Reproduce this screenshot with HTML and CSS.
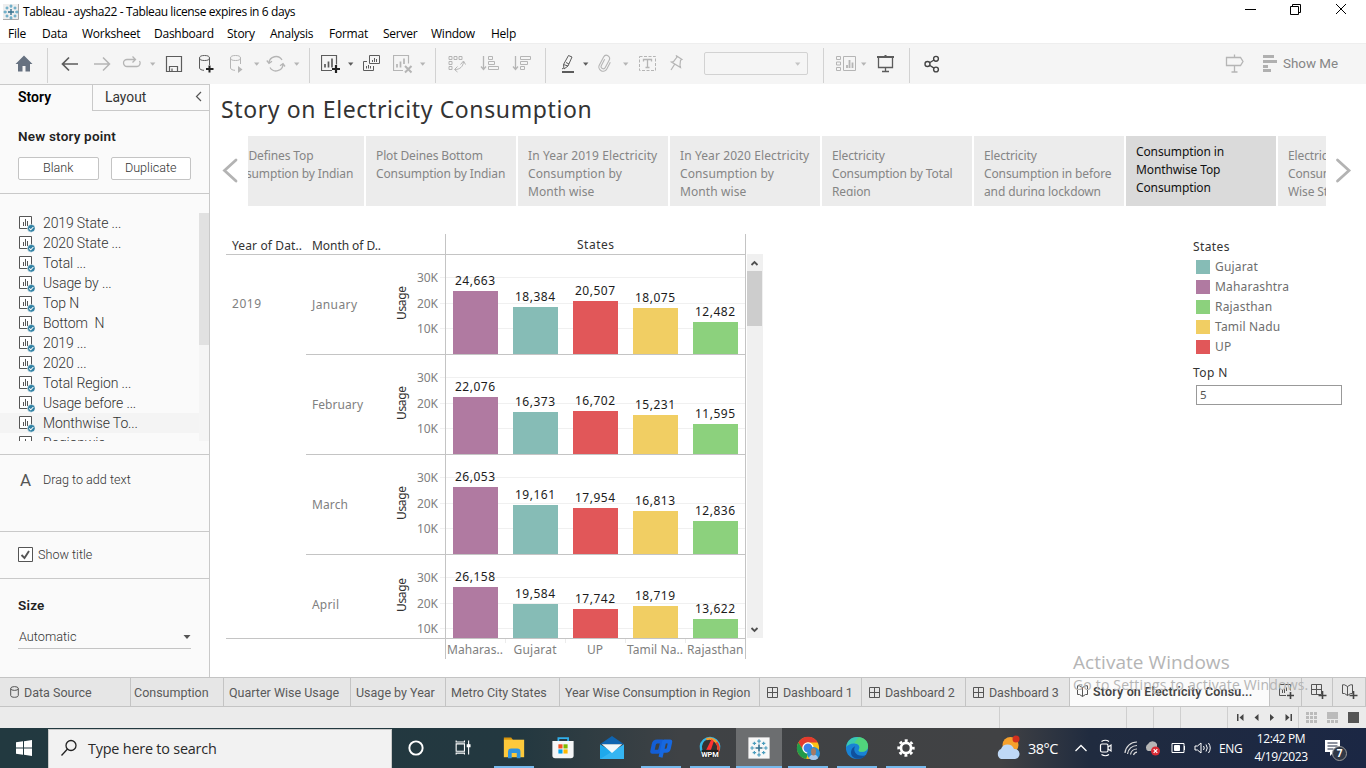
FILE: index.html
```html
<!DOCTYPE html>
<html lang="en">
<head>
<meta charset="utf-8">
<title>Tableau - aysha22</title>
<link rel="stylesheet" href="styles.css">
</head>
<body>
<svg class="defs" width="0" height="0">
  <defs>
    <g id="spark">
      <path d="M8 5v6M5 8h6" stroke="#35718f" stroke-width="1.4"/>
      <path d="M8 .5v3.500M6.500 2h3M8 12v3.500M6.500 14h3M.5 8H4M2 6.500v3M12 8h3.500M14 6.500v3M4 2.500v3M2.500 4h3M12 2.500v3M10.500 4h3M4 10.500v3M2.500 12h3M12 10.500v3M10.500 12h3" stroke="#4a9cbd" stroke-width="1"/>
    </g>
    <g id="sheet">
      <path d="M.5 .5h12v12H.5z" fill="#fff" stroke="#555"/>
      <path d="M4.500 6v4M6.500 3v7M8.500 5v5" stroke="#555"/>
      <circle cx="12.300" cy="12.300" r="3.900" fill="#3181a3" stroke="#fafafa" stroke-width=".6"/>
      <path d="M10.300 12.300l1.500 1.500 2.600-2.800" fill="none" stroke="#fff" stroke-width="1.100"/>
    </g>
    <g id="board"><path d="M.5 .5h10v10H.5zM5.500 .5v10M.5 5.500h10" fill="none" stroke="#555"/></g>
    <g id="book"><path d="M5.500 2.500v9M5.500 2.500L2.500 .8H.5v8.700h2l3 2 3-2h2V.8h-2z" fill="none" stroke="#555"/></g>
    <path id="caret" d="M1 1.500h5.400L3.700 4.700z"/>
  </defs>
</svg>

<header class="titlebar">
  <svg width="16" height="16"><path d="M0 0h15v15H0z" fill="#eee"/><path d="M15.500 0v15.500H0" fill="none" stroke="#aaa"/><use href="#spark"/></svg>
  <span class="win-title">Tableau - aysha22 - Tableau license expires in 6 days</span>
  <svg class="win-buttons" width="112" height="16" fill="none" stroke="#000"><path d="M0 8.500h11M45.500 5.500h8v8h-8zM47.500 5.500v-2h8v8h-2M91 3l10 10M101 3L91 13"/></svg>
</header>
<nav class="menubar"><span>File</span><span>Data</span><span>Worksheet</span><span>Dashboard</span><span>Story</span><span>Analysis</span><span>Format</span><span>Server</span><span>Window</span><span>Help</span></nav>

<div class="toolbar">
  <svg class="ic" viewBox="0 0 20 20"><path d="M10 1.500L1.500 10H4v7.500h4.500V12h3v5.500H16V10h2.500z" fill="#667180"/></svg>
  <i class="sep"></i>
  <svg class="ic dark" viewBox="0 0 20 20"><path d="M18 10H3M9 3.500L2.500 10 9 16.500" stroke-width="1.700"/></svg>
  <svg class="ic pale" viewBox="0 0 20 20"><path d="M2 10h15M11 3.500l6.500 6.500-6.500 6.500" stroke-width="1.500"/></svg>
  <svg class="ic pale" viewBox="0 0 20 20"><path d="M13 5.500H5a3.500 3.500 0 0 0 0 7h10a3.500 3.500 0 0 0 2.500-5.500M10.500 2.500l3 3-3 3" stroke-width="1.300"/></svg>
  <svg class="caret pale"><use href="#caret"/></svg>
  <svg class="ic dark" viewBox="0 0 20 20"><path d="M2.500 2.500h15v15h-15zM5.500 17v-4.500h8V17M8 17v-2.500" stroke-width="1.200"/></svg>
  <svg class="ic dark" viewBox="0 0 20 20"><ellipse cx="8.500" cy="4" rx="5" ry="2.500"/><path d="M3.500 4v10c0 1.200 2 2.200 4.500 2.300M13.500 4v7"/><path d="M13.500 11.500v7M10 15h7.500" stroke="#222" stroke-width="2"/></svg>
  <svg class="ic pale" viewBox="0 0 20 20"><ellipse cx="8.500" cy="4" rx="5" ry="2.500"/><path d="M3.500 4v10c0 1.200 2 2.200 4.500 2.300M13.500 4v6"/><path d="M11 12v7l4.500-3.500z" fill="#b5b5b5" stroke="none"/></svg>
  <svg class="caret pale"><use href="#caret"/></svg>
  <svg class="ic pale" viewBox="0 0 20 20"><path d="M3 9a7 7 0 0 1 13-3M17 10A7 7 0 0 1 4 13.500M.8 6.500L3 9.300l3-2M19 12.500l-2-2.800-3 2" stroke-width="1.300"/></svg>
  <svg class="caret pale"><use href="#caret"/></svg>
  <i class="sep"></i>
  <svg class="ic dark" viewBox="0 0 20 20"><path d="M11 16.500H.5V1.500h15v9" stroke-width="1.200"/><path d="M4 13.500V10M7.500 13.500v-6M11 13.500v-9" stroke-width="1.700"/><path d="M15 11v8M11 15h8" stroke="#222" stroke-width="2.200"/></svg>
  <svg class="caret dark"><use href="#caret"/></svg>
  <svg class="ic dark" viewBox="0 0 20 20"><path d="M7.500 1.500h10v8h-10zM5 7.500H1.500v9h10v-4.500"/><path d="M10.500 8V6M12.500 8V4M14.500 8V5M4.500 14.500V12M6.500 14.500V11M8.500 14.500V12"/></svg>
  <svg class="ic pale" viewBox="0 0 20 20"><path d="M10 16.500H.5V1.500h15v8" stroke-width="1.200"/><path d="M4 13.500V10M7.500 13.500v-6M11 10V4.500" stroke-width="1.700"/><path d="M12 12l6.500 6.500M18.500 12L12 18.500" stroke-width="2"/></svg>
  <svg class="caret pale"><use href="#caret"/></svg>
  <i class="sep"></i>
  <svg class="ic pale" viewBox="0 0 20 20"><path d="M2 2.500h3v3H2zM7 2.500h3v3H7zM12 2.500h3v3h-3zM2 7.500h3v3H2zM2 12.500h3v3H2zM8 15.500c5 0 8-3 8.500-7.500M13.500 10.500L16.500 7l2 3.500M10.500 12.500L7.500 15.500l3 2.500"/></svg>
  <svg class="ic pale" viewBox="0 0 20 20"><path d="M3.500 2v13M1 12.500l2.500 3 2.500-3" stroke-width="1.300"/><path d="M8.500 2.500h4v3h-4zM8.500 7.500h6v3h-6zM8.500 12.500h10v3h-10z"/></svg>
  <svg class="ic pale" viewBox="0 0 20 20"><path d="M3.500 2v13M1 12.500l2.500 3 2.500-3" stroke-width="1.300"/><path d="M8.500 2.500h10v3h-10zM8.500 7.500h7v3h-7zM8.500 12.500h4v3h-4z"/></svg>
  <i class="sep"></i>
  <svg class="ic dark" viewBox="0 0 20 20"><path d="M4 18h12" stroke-width="2"/><path d="M10.500 1.500l3.500 1.500-4 9-4 3-.5-4.500zM5.500 10.500l4.500 1.500M8 8.500l3 1.500M5.500 14l-1.500 1"/></svg>
  <svg class="caret dark"><use href="#caret"/></svg>
  <svg class="ic pale" viewBox="0 0 20 20"><g transform="rotate(28 10 10)"><path d="M7.500 6v7a2.200 2.200 0 0 0 4.400 0V4.500a3.200 3.200 0 0 0-6.400 0v9a4.200 4.200 0 0 0 8.400 0V6" stroke-width="1.100"/></g></svg>
  <svg class="caret pale"><use href="#caret"/></svg>
  <svg class="ic pale" viewBox="0 0 20 20"><path d="M1.500 2.500h16v14h-16z" stroke-dasharray="3 1.500"/><path d="M5.500 7.500v-2h8v2M9.500 5.500v8M7.500 13.500h4" stroke-width="1.300"/></svg>
  <svg class="ic pale" viewBox="0 0 20 20"><path d="M10 1.500l6 4-1.500.8-.5 5 .5 2.200-9-5.500 2-.3L11 3zM8.500 10.500L5 16" transform="translate(-1 0)" stroke-width="1.200"/></svg>
  <div class="combo"><svg class="caret"><use href="#caret"/></svg></div>
  <i class="sep"></i>
  <svg class="ic pale" viewBox="0 0 20 20"><path d="M.5 2.500h4v3h-4zM.5 8h4v3h-4zM.5 13.500h4v3h-4zM7.500 2.500h12v14h-12z"/><path d="M11 14v-3M13.500 14V6M16.500 14V8.500" stroke-width="1.800"/></svg>
  <svg class="caret pale"><use href="#caret"/></svg>
  <svg class="ic dark" viewBox="0 0 20 20"><path d="M1 3h17M9.500 1v1" stroke-width="2"/><path d="M2.500 4v9.500h14V4M9.500 13.500v4M6 17.500h7" stroke-width="1.300"/></svg>
  <i class="sep"></i>
  <svg class="ic share" viewBox="0 0 20 20"><circle cx="5.500" cy="10" r="2.500"/><circle cx="14" cy="4.800" r="2.400"/><circle cx="14" cy="15.500" r="2.400"/><path d="M8 8.500L12 6M8 11.500l4 2.700"/></svg>
  <svg class="ic pale" viewBox="0 0 20 20"><path d="M2.500 3.500h14l2.500 4-2.500 4h-14zM10.500 .5v3M10.500 11.500v7M7.500 18h6" stroke-width="1.300"/></svg>
  <div class="showme"><svg width="16" height="19" fill="#b0b0b0"><path d="M1 1h11v3H1zM1 6h14v3H1zM1 11h5v3H1zM1 15h8v3H1z"/></svg><span>Show Me</span></div>
</div>

<main class="main">
  <aside class="side">
    <div class="side-tabs"><b>Story</b><div class="layout-tab"><span>Layout</span><svg width="8" height="11" fill="none" stroke="#555" stroke-width="1.200"><path d="M6 1L1.500 5.500 6 10"/></svg></div></div>
    <section class="new-point">
      <h2>New story point</h2>
      <div class="btns"><button>Blank</button><button>Duplicate</button></div>
    </section>
    <section class="sheets">
      <ul>
        <li><svg><use href="#sheet"/></svg>2019 State ...</li>
        <li><svg><use href="#sheet"/></svg>2020 State ...</li>
        <li><svg><use href="#sheet"/></svg>Total ...</li>
        <li><svg><use href="#sheet"/></svg>Usage by ...</li>
        <li><svg><use href="#sheet"/></svg>Top N</li>
        <li><svg><use href="#sheet"/></svg>Bottom&nbsp; N</li>
        <li><svg><use href="#sheet"/></svg>2019 ...</li>
        <li><svg><use href="#sheet"/></svg>2020 ...</li>
        <li><svg><use href="#sheet"/></svg>Total Region ...</li>
        <li><svg><use href="#sheet"/></svg>Usage before ...</li>
        <li class="hover"><svg><use href="#sheet"/></svg>Monthwise To...</li>
        <li><svg><use href="#sheet"/></svg>Regionwis...</li>
      </ul>
      <div class="side-scroll"><i></i></div>
    </section>
    <section class="drag"><span class="big-a">A</span><span>Drag to add text</span></section>
    <section class="show-title"><svg width="15" height="15" fill="none" stroke="#555"><path d="M.5 .5h14v14H.5z" fill="#fff"/><path d="M3.500 8l3 3 4.500-7" stroke-width="1.900"/></svg><span>Show title</span></section>
    <section class="size"><h2>Size</h2><div class="size-select"><span>Automatic</span><svg width="8" height="6" fill="#555"><path d="M.5 1h7L4 5z"/></svg></div></section>
  </aside>

  <div class="canvas">
    <h1>Story on Electricity Consumption</h1>
    <div class="navigator">
      <svg class="arrow" width="38" height="70"><path d="M26 24L14.500 34.500 26 45" /></svg>
      <div class="points">
        <div class="pt"><p>Plot Defines Top<br>Consumption by Indian</p></div>
        <div class="pt"><p>Plot Deines Bottom<br>Consumption by Indian</p></div>
        <div class="pt wide"><p>In Year 2019 Electricity<br>Consumption by<br>Month wise</p></div>
        <div class="pt wide"><p>In Year 2020 Electricity<br>Consumption by<br>Month wise</p></div>
        <div class="pt"><p>Electricity<br>Consumption by Total<br>Region</p></div>
        <div class="pt"><p>Electricity<br>Consumption in before<br>and during lockdown</p></div>
        <div class="pt on"><p>Consumption in<br>Monthwise Top<br>Consumption</p></div>
        <div class="pt"><p>Electricity<br>Consumption<br>Wise States</p></div>
      </div>
      <svg class="arrow" width="38" height="70"><path d="M11.500 24L23 34.500 11.500 45"/></svg>
    </div>
    <div class="viz">
      <svg class="chart" width="540" height="428" viewBox="226 234 540 428">
        <clipPath id="pane"><path d="M226 234h540v404H226z"/></clipPath>
        <g clip-path="url(#pane)">
          <path d="M440 277.500h305M440 303.500h305M440 328.500h305M440 377.500h305M440 403.500h305M440 428.500h305M440 477.500h305M440 503.500h305M440 528.500h305M440 577.500h305M440 603.500h305M440 628.500h305" stroke="#f0f0f0"/>
          <path fill="#b07aa1" d="M453 291h45v63h-45zM453 397h45v57h-45zM453 487h45v67h-45zM453 587h45v67h-45z"/>
          <path fill="#86bcb6" d="M513 307h45v47h-45zM513 412h45v42h-45zM513 505h45v49h-45zM513 604h45v50h-45z"/>
          <path fill="#e15759" d="M573 301h45v53h-45zM573 411h45v43h-45zM573 508h45v46h-45zM573 609h45v45h-45z"/>
          <path fill="#f1ce63" d="M633 308h45v46h-45zM633 415h45v39h-45zM633 511h45v43h-45zM633 606h45v48h-45z"/>
          <path fill="#8cd17d" d="M693 322h45v32h-45zM693 424h45v30h-45zM693 521h45v33h-45zM693 619h45v35h-45z"/>
        </g>
        <path d="M226 254.500h520M306 354.500h440M306 454.500h440M306 554.500h440M226 638.500h520M445.500 234v425M745.500 234v425" stroke="#c4c4c4"/>
        <path d="M505.500 639v4M565.500 639v4M625.500 639v4M685.500 639v4" stroke="#ececec"/>
        <g class="head">
          <text x="232" y="250" textLength="70">Year of Dat..</text><text x="312" y="250" textLength="69">Month of D..</text><text x="577" y="249" textLength="37">States</text>
        </g>
        <g class="dim">
          <text x="232" y="308" textLength="29">2019</text>
          <text x="312" y="309" textLength="45">January</text><text x="312" y="409" textLength="51">February</text><text x="312" y="509" textLength="36">March</text><text x="312" y="609" textLength="27">April</text>
          <text x="417" y="282" textLength="21">30K</text><text x="417" y="308" textLength="21">20K</text><text x="417" y="333" textLength="21">10K</text>
          <text x="417" y="382" textLength="21">30K</text><text x="417" y="408" textLength="21">20K</text><text x="417" y="433" textLength="21">10K</text>
          <text x="417" y="482" textLength="21">30K</text><text x="417" y="508" textLength="21">20K</text><text x="417" y="533" textLength="21">10K</text>
          <text x="417" y="582" textLength="21">30K</text><text x="417" y="608" textLength="21">20K</text><text x="417" y="633" textLength="21">10K</text>
          <text x="447" y="654" textLength="56">Maharas..</text><text x="513.500" y="654" textLength="43">Gujarat</text><text x="587" y="654" textLength="16">UP</text><text x="627" y="654" textLength="56">Tamil Na..</text><text x="687" y="654" textLength="56.500">Rajasthan</text>
        </g>
        <g class="head">
          <text transform="translate(406 320) rotate(-90)" textLength="34">Usage</text><text transform="translate(406 420) rotate(-90)" textLength="34">Usage</text><text transform="translate(406 520) rotate(-90)" textLength="34">Usage</text><text transform="translate(406 612) rotate(-90)" textLength="34">Usage</text>
        </g>
        <g class="mark">
          <text x="455" y="285" textLength="40">24,663</text><text x="515" y="301" textLength="40">18,384</text><text x="575" y="295" textLength="40">20,507</text><text x="635" y="302" textLength="40">18,075</text><text x="695" y="316" textLength="40">12,482</text>
          <text x="455" y="391" textLength="40">22,076</text><text x="515" y="406" textLength="40">16,373</text><text x="575" y="405" textLength="40">16,702</text><text x="635" y="409" textLength="40">15,231</text><text x="695" y="418" textLength="40">11,595</text>
          <text x="455" y="481" textLength="40">26,053</text><text x="515" y="499" textLength="40">19,161</text><text x="575" y="502" textLength="40">17,954</text><text x="635" y="505" textLength="40">16,813</text><text x="695" y="515" textLength="40">12,836</text>
          <text x="455" y="581" textLength="40">26,158</text><text x="515" y="598" textLength="40">19,584</text><text x="575" y="603" textLength="40">17,742</text><text x="635" y="600" textLength="40">18,719</text><text x="695" y="613" textLength="40">13,622</text>
        </g>
        <path d="M747 254h16v384h-16z" fill="#f0f0f0"/><path d="M747 271h15v55h-15z" fill="#cdcdcd"/>
        <path d="M751.500 265l3-3 3 3M751.500 628l3 3 3-3" fill="none" stroke="#505050" stroke-width="1.800"/>
      </svg>
      <div class="legend">
        <h3>States</h3>
        <ul>
          <li><i class="c-guj"></i>Gujarat</li><li><i class="c-mah"></i>Maharashtra</li><li><i class="c-raj"></i>Rajasthan</li><li><i class="c-tam"></i>Tamil Nadu</li><li><i class="c-up"></i>UP</li>
        </ul>
        <h3>Top N</h3>
        <div class="param">5</div>
      </div>
    </div>
  </div>
</main>

<nav class="tabs">
  <span class="t-data"><svg width="9" height="12" fill="none" stroke="#555"><ellipse cx="4.500" cy="2.500" rx="3.800" ry="1.900"/><path d="M.7 2.500v7c0 2.400 7.600 2.400 7.600 0v-7"/></svg>Data Source</span>
  <span class="t-cons">Consumption</span><span>Quarter Wise Usage</span><span>Usage by Year</span><span>Metro City States</span><span class="t-year">Year Wise Consumption in Region</span>
  <span class="t-dash"><svg width="11" height="11"><use href="#board"/></svg>Dashboard 1</span>
  <span class="t-dash"><svg width="11" height="11"><use href="#board"/></svg>Dashboard 2</span>
  <span class="t-dash"><svg width="11" height="11"><use href="#board"/></svg>Dashboard 3</span>
  <span class="t-dash on"><svg width="11" height="13"><use href="#book"/></svg>Story on Electricity Consu...</span>
  <span class="t-add"><svg width="16" height="16"><path d="M7 11.500H.5v-11h11v6M3.500 9V6M5.500 9V4.500M7.500 7V3.500" fill="none" stroke="#555"/><path d="M11.500 8v7M8 11.500h7" stroke="#444" stroke-width="1.600"/></svg></span>
  <span class="t-add"><svg width="16" height="16"><use href="#board"/><path d="M11.500 7v8M7.500 11.500h8" stroke="#444" stroke-width="1.600"/></svg></span>
  <span class="t-add"><svg width="16" height="16"><use href="#book"/><path d="M11.500 7v8M7.500 11.500h8" stroke="#444" stroke-width="1.600"/></svg></span>
</nav>
<div class="status">
  <span></span><span></span><span></span><span></span><span></span>
  <span class="pager"><svg width="58" height="10" fill="#444"><path d="M2 1h1.500v7H2zM8.500 1v7l-4-3.500zM23.500 1v7l-4-3.500zM35 1v7l4-3.500zM50.500 1v7l4-3.500zM55.500 1H57v7h-1.500z"/></svg></span>
  <span class="views"><svg width="54" height="12"><g fill="#bbb"><path d="M0 0h3v3H0zM4 0h3v3H4zM8 0h3v3H8zM0 4h3v3H0zM4 4h3v3H4zM8 4h3v3H8zM0 8h3v3H0zM4 8h3v3H4zM8 8h3v3H8zM21 0h11v7H21zM21 8h3v3h-3zM25 8h3v3h-3zM29 8h3v3h-3z"/></g><path d="M42 0h11v11H42z" fill="#555"/></svg></span>
</div>

<footer class="taskbar">
  <div class="start"><svg width="16" height="16" fill="#fff"><path d="M0 2.300L7 1.300v6.200H0zM8 1.200L16 0v7.500H8zM0 8.500h7v6.200l-7-1zM8 8.500h8V16l-8-1.200z"/></svg></div>
  <div class="search"><svg width="18" height="18" fill="none" stroke="#222" stroke-width="1.300"><circle cx="11" cy="6.500" r="5"/><path d="M7.500 10L1.500 16.500"/></svg><span>Type here to search</span></div>
  <div class="apps">
    <div><svg viewBox="0 0 26 26"><circle cx="13" cy="13" r="7.200" fill="none" stroke="#fff" stroke-width="2.100"/></svg></div>
    <div class="task-view"><svg viewBox="0 0 26 26" fill="none" stroke="#fff" stroke-width="1.200"><path d="M4.500 8.500h9v8h-9zM4.500 5v1.500h9V5M4.500 20v-1.500h9V20M18 5v15"/><path d="M16.500 9.500h3v2h-3z" fill="#fff"/></svg></div>
    <div class="run"><svg viewBox="0 0 26 26"><path d="M2 1.500h8l2 3H2z" fill="#d9950c"/><path d="M2 4h22v19H2z" fill="#fdc93b"/><path d="M6.500 24v-7q0-3.500 3.500-3.500h6.500q3.500 0 3.500 3.500v7h-4v-5.500h-5.500V24z" fill="#2f93df"/></svg></div>
    <div><svg viewBox="0 0 26 26"><path d="M8 6.500V2.300h10.500v4.200" fill="none" stroke="#31b0ec" stroke-width="1.900"/><path d="M1.500 5.500h23V21q0 3-3 3h-17q-3 0-3-3z" fill="#f4f6f7"/><path d="M8 9h4.500v4.500H8z" fill="#f25022"/><path d="M13.500 9H18v4.500h-4.500z" fill="#7fba00"/><path d="M8 14.500h4.500V19H8z" fill="#00a4ef"/><path d="M13.500 14.500H18V19h-4.500z" fill="#ffb900"/></svg></div>
    <div><svg viewBox="0 0 26 26"><path d="M0 9L13 0l13 9z" fill="#0f64b0"/><path d="M0 9v16h26z" fill="#1fa9ec"/><path d="M26 9v16H0z" fill="#35b5f2"/><path d="M2 9h22L13 18.500z" fill="#f1f8fc"/></svg></div>
    <div class="run"><svg viewBox="0 0 26 26" fill="none" stroke-linejoin="round"><path d="M10 17H3.500L5 10Q5.500 6 9 6h5.500l-2 8q-.7 3-3 3" stroke="#135ed6" stroke-width="4.400"/><path d="M12.500 23l4-17H23l-1.500 7q-.7 3-3 3h-3.500" stroke="#1668e0" stroke-width="4.400"/></svg></div>
    <div class="run"><svg viewBox="0 0 26 26"><path d="M5 18a10 10 0 1 1 16 0" fill="#333" stroke="#34b6e5" stroke-width="2.500"/><path d="M9 3.500a10 10 0 0 1 12 14" fill="none" stroke="#f09a2c" stroke-width="2.500"/><path d="M20 7a10 10 0 0 1 1 11" fill="none" stroke="#e5382d" stroke-width="2.500"/><path d="M10 15l5-10 1 1-3 9z" fill="#f33" stroke="#f33" stroke-width="2"/><path d="M4 15h18v8H4z" fill="#222"/><text x="13" y="22.500" class="wpm">WPM</text></svg></div>
    <div class="run active"><svg viewBox="0 0 26 26"><path d="M1.500 1.500h23v23h-23z" fill="#f7f7f7"/><use href="#spark" transform="translate(3 3) scale(1.250)"/></svg></div>
    <div class="run"><svg viewBox="0 0 26 26"><circle cx="13" cy="13" r="12" fill="#fbc116"/><path d="M2.600 7A12 12 0 0 1 23.500 7H13a6 6 0 0 0-5.300 8.500z" fill="#e33b2e"/><path d="M2.600 7l6 9.500L13 19l-2 6A12 12 0 0 1 2.600 7z" fill="#229a4a"/><circle cx="13" cy="13" r="5.500" fill="#3c80e8" stroke="#fff" stroke-width="1.400"/><circle cx="19" cy="19" r="7" fill="#268fd6"/><path d="M14 24q1-4 5-4t5 4q-5 4-10 0z" fill="#a9c7e9"/><ellipse cx="19" cy="17" rx="2.700" ry="4" fill="#a67b66"/></svg></div>
    <div class="run"><svg viewBox="0 0 26 26"><circle cx="13" cy="13" r="12" fill="#1982d4"/><path d="M1.500 12C2 5 7 1 13 1c7 0 12 4.500 12 10 0 4-3 6-6.500 6-3 0-4.500-1-3.500-2.500C17 11 14 8 10 8c-4.500 0-7.500 2-8.500 4z" fill="#3bc9b1"/><path d="M15 1.200C21 2 25 6 25 11c0 4-3 6-6.500 6-3 0-4.500-1-3.500-2.500 3-3-1-7-5-7z" fill="#59d66b" opacity=".75"/><path d="M11 11c-3 5 1 12 11 10-3 4-9 5-13 2s-3-10 2-12z" fill="#10509d"/></svg></div>
    <div class="run"><svg viewBox="0 0 26 26" fill="none" stroke="#fff"><circle cx="13" cy="13" r="5.500" stroke-width="3"/><circle cx="13" cy="13" r="8" stroke-width="2.800" stroke-dasharray="3.200 3.080" stroke-dashoffset="1.600"/></svg></div>
  </div>
  <div class="tray">
    <svg width="26" height="26"><circle cx="15.500" cy="10" r="8" fill="#f6a02c"/><circle cx="21" cy="4" r="3.500" fill="#d32f1e"/><path d="M6 24a5.500 5.500 0 0 1 0-10 7 7 0 0 1 13 0 5 5 0 0 1 1 10z" fill="#bfd8f6"/></svg>
    <span class="temp">38°C</span>
    <svg width="14" height="10" fill="none" stroke="#fff" stroke-width="1.300"><path d="M1.500 8L7 2.500 12.500 8"/></svg>
    <svg width="14" height="18" fill="none" stroke="#fff" stroke-width="1.200"><rect x="1.500" y="5" width="7.500" height="8" rx="1.500"/><path d="M9 8l3-2v6l-3-2M2.500 2.500q4-2.500 7.500 0M2.500 15.500q4 2.500 7.500 0"/></svg>
    <svg width="14" height="16" fill="none" stroke="#ddd" stroke-width="1.200"><path d="M1 13A12 12 0 0 1 13 2M3.500 14A9.500 9.500 0 0 1 13 5.500M6.500 14.500A6.500 6.500 0 0 1 13 9M9.500 15A4 4 0 0 1 13 12.200"/></svg>
    <svg width="18" height="16"><path d="M4 11a4 4 0 0 1 0-7 5 5 0 0 1 9 0v7z" fill="#b6b6b6"/><circle cx="11.500" cy="11" r="4.500" fill="#d92b35"/><path d="M9.700 9.200l3.600 3.600M13.300 9.200l-3.600 3.600" stroke="#fff" stroke-width="1.200"/></svg>
    <svg width="16" height="12" fill="none" stroke="#fff"><path d="M1 1.500h12v9H1zM13.500 4v4"/><path d="M3.500 3.500h5v5h-5z" fill="#fff"/></svg>
    <svg width="18" height="14" fill="none" stroke="#fff"><path d="M1 5v4h2.500L7 12V2L3.500 5zM9.500 5q1.500 2 0 4M12 3.500q2.500 3.500 0 7M14.500 2q3.500 5 0 10"/></svg>
    <span class="lang">ENG</span>
    <div class="clock"><span>12:42 PM</span><span>4/19/2023</span></div>
    <div class="notif"><svg width="18" height="18"><path d="M1 1h15v12h-6l-4 4v-4H1z" fill="#fff"/><path d="M3.500 4h10M3.500 7h10M3.500 10h6" stroke="#1c2740"/></svg><b>7</b></div>
  </div>
</footer>
<div class="watermark"><p>Activate Windows</p><p>Go to Settings to activate Windows.</p></div>
</body>
</html>
```

FILE: styles.css
```css
* { box-sizing: border-box; }
body { margin: 0; width: 1366px; height: 768px; overflow: hidden; position: relative; display: flex; flex-direction: column; background: #fff; color: #000; font-family: "Open Sans", sans-serif; font-size: 12px; }
.defs { position: absolute; }
h1, h2, h3, p, ul { margin: 0; padding: 0; font-weight: 400; }
ul { list-style: none; }
svg { display: block; flex: none; }
span, button { white-space: nowrap; }

.titlebar { height: 24px; display: flex; align-items: center; padding-left: 3px; }
.win-title { margin: -1px 0 0 4px; letter-spacing: -.39px; }
.win-buttons { margin-left: auto; margin-right: 9px; margin-top: -6px; }
.menubar { height: 19px; padding-left: 8px; display: grid; grid-template-columns: 34px 40px 72px 73px 43px 59px 54px 48px 60px auto; line-height: 19px; letter-spacing: -.24px; }

.toolbar { height: 41px; background: #f5f5f5; border-top: 1px solid #eee; padding-left: 14px; display: grid; align-items: center; justify-items: start;
  grid-template-columns: 33px 13px 32px 30px 27px 15px 32px 31px 26px 13px 27px 16px 12px 26px 15px 31px 26px 16px 12px 33px 32px 33px 13px 24px 13px 27px 16px 29px 37px 119px 13px 24px 16px 33px 13px 302px 38px auto; }
.ic { width: 20px; height: 20px; fill: none; }
.ic.dark { stroke: #5c5c5c; }
.ic.pale { stroke: #b5b5b5; }
.ic.share { stroke: #444; stroke-width: 1.4; }
.caret { width: 8px; height: 6px; fill: #c4c4c4; }
.caret.dark { fill: #5c5c5c; }
.caret.pale { fill: #b5b5b5; }
.sep { width: 1px; height: 35px; background: #d2d2d2; margin-top: 2px; }
.combo { width: 104px; height: 23px; margin-top: -1px; border: 1px solid #d2d2d2; border-radius: 2px; display: flex; align-items: center; justify-content: flex-end; padding-right: 5px; }
.showme { display: flex; align-items: center; gap: 5px; margin-top: -2px; color: #858585; font: 13.4px Roboto, sans-serif; }

.main { height: 593px; display: flex; }
.side { width: 210px; background: #fafafa; border-right: 1px solid #c9c9c9; display: flex; flex-direction: column; font-family: Roboto, sans-serif; font-size: 13px; color: #333; }
.side-tabs { height: 27px; display: flex; border-top: 1px solid #c9c9c9; }
.side-tabs b { width: 92px; padding: 4px 0 0 18px; color: #000; font-size: 14px; font-weight: 600; }
.layout-tab { flex: 1; border-left: 1px solid #c9c9c9; border-bottom: 1px solid #c9c9c9; display: flex; align-items: center; justify-content: space-between; padding: 0 6px 2px 12px; font-size: 13.8px; color: #333; }
.side h2 { font-size: 13.5px; line-height: 16px; font-weight: 600; color: #222; letter-spacing: .2px; }
.new-point { height: 83px; padding: 17px 18px 0; border-bottom: 1px solid #c9c9c9; }
.btns { display: flex; gap: 12px; margin-top: 13px; }
.btns button { width: 81px; height: 23px; padding: 0 0 2px; background: #fff; border: 1px solid #c4c4c4; border-radius: 2px; font: 300 12.6px Roboto, sans-serif; color: #333; }
.sheets { height: 261px; padding-top: 19px; border-bottom: 1px solid #c9c9c9; display: flex; }
.sheets ul { flex: 1; height: 228px; overflow: hidden; }
.sheets li { height: 20px; padding-left: 19px; display: flex; align-items: center; gap: 8px; font-size: 14px; font-weight: 300; letter-spacing: -.12px; }
.sheets li svg { width: 16px; height: 17px; margin-top: 3px; }
.sheets .hover { background: #f4f4f4; }
.side-scroll { width: 10px; height: 228px; background: #f5f5f5; }
.side-scroll i { display: block; height: 132px; background: #e1e1e1; }
.drag { height: 77px; border-bottom: 1px solid #c9c9c9; padding: 16px 0 0 20px; display: flex; align-items: flex-start; gap: 12px; line-height: 18px; font-size: 12.6px; font-weight: 300; }
.big-a { font-size: 17px; width: 11px; font-weight: 400; color: #555; }
.show-title { height: 47px; border-bottom: 1px solid #c9c9c9; padding: 0 0 1px 18px; display: flex; align-items: center; gap: 5px; font-size: 12.6px; font-weight: 300; }
.size { padding: 18px 18px 0; }
.size-select { height: 24px; margin-top: 12px; border-bottom: 1px solid #c4c4c4; display: flex; align-items: center; justify-content: space-between; padding-left: 1px; font-size: 12.7px; font-weight: 300; }

.canvas { flex: 1; min-width: 0; font-family: "Noto Sans", sans-serif; }
h1 { height: 52px; padding: 8px 0 0 11px; font-size: 23px; line-height: 34px; color: #333; letter-spacing: .62px; }
.navigator { height: 70px; display: flex; }
.arrow { fill: none; stroke: #b3b3b3; stroke-width: 2.8; stroke-linecap: round; }
.points { width: 1078px; overflow: hidden; display: flex; justify-content: flex-start; gap: 2px; }
.pt { flex: none; width: 150px; height: 70px; background: #ececec; padding: 11px 0 0 10px; color: #858585; font-size: 12px; line-height: 18px; white-space: nowrap; letter-spacing: -.12px; }
.pt.wide { letter-spacing: .1px; }
.pt:first-child { margin-left: -34px; }
.pt p { height: 49px; overflow: hidden; }
.pt.on { background: #dadada; padding-top: 7px; color: #111; }
.pt.on p { height: 56px; }
.viz { display: flex; justify-content: space-between; padding: 28px 24px 0 16px; }
.chart text { font-family: "Noto Sans", sans-serif; font-size: 12px; }
.head text { fill: #333; }
.dim text { fill: #808080; }
.mark text { fill: #1c1c1c; }
.legend { width: 149px; padding-top: 3px; color: #333; }
.legend h3 { font-size: 12px; line-height: 20px; letter-spacing: .4px; }
.legend li { height: 20px; display: flex; align-items: center; gap: 5px; padding: 0 0 1px 3px; line-height: 17px; color: #6e6e6e; letter-spacing: .18px; }
.legend li i { width: 14px; height: 14px; }
.legend ul { margin-bottom: 6px; }
.c-guj { background: #86bcb6; }
.c-mah { background: #b07aa1; }
.c-raj { background: #8cd17d; }
.c-tam { background: #f1ce63; }
.c-up { background: #e15759; }
.param { width: 146px; height: 20px; margin: 2px 0 0 3px; border: 1px solid #999; padding-left: 3px; font-size: 11.5px; line-height: 18px; color: #555; }

.tabs { height: 30px; background: #e6e6e6; border-top: 1px solid #c4c4c4; border-bottom: 1px solid #c4c4c4; display: grid; grid-template-columns: 131px 93px 127px 95px 114px 200px 102px 104px 104px 200px 32px 31px 33px; font-family: Roboto, sans-serif; font-size: 12.5px; color: #5a5a5a; }
.tabs > span { display: flex; align-items: center; gap: 4px; padding-left: 5px; border-right: 1px solid #c4c4c4; }
.tabs .t-data { padding-left: 10px; gap: 5px; }
.tabs .t-cons { padding-left: 3px; }
.tabs .t-year { letter-spacing: -.07px; }
.tabs .t-dash { padding-left: 7px; gap: 5px; letter-spacing: -.08px; }
.tabs .on { background: #fbfbfb; font-weight: 600; color: #444; font-size: 12.5px; letter-spacing: .16px; padding-bottom: 2px; }
.tabs .t-add { padding-left: 9px; }
.status { height: 21px; background: #ebebeb; display: grid; grid-template-columns: 1000px 127px 27px 27px 47px 71px auto; }
.status span { border-right: 1px solid #cfcfcf; }
.status span:last-child { border: 0; }
.pager, .views { display: flex; align-items: center; padding-left: 7px; }

.taskbar { height: 40px; display: flex; background: linear-gradient(90deg, #223940 0, #233840 520px, #3f4245 680px, #414244 1000px, #202b3f 1090px, #1b2744 1366px); color: #fff; }
.start { width: 48px; display: flex; align-items: center; justify-content: center; }
.search { width: 344px; margin-top: 1px; background: #f2f2f2; border: 1px solid #c9c9c9; border-bottom: 0; display: flex; align-items: center; gap: 10px; padding: 0 0 2px 11px; color: #2a2a2a; font-size: 14.4px; letter-spacing: -.2px; }
.apps { width: 602px; display: grid; grid-template-columns: repeat(11, 49px); }
.apps div { width: 46px; margin-left: 1px; height: 40px; display: flex; align-items: center; justify-content: center; }
.apps svg { width: 24px; height: 24px; }
.apps .task-view { margin-left: 0; }
.apps .run { border-bottom: 2px solid #76b9ed; padding-top: 2px; width: 40px; margin-left: 4px; }
.apps .active { background: #6c6e70; width: 46px; margin-left: 1px; }
.wpm { font: bold 8px Roboto, sans-serif; fill: #fff; text-anchor: middle; }
.tray { display: grid; align-items: center; grid-template-columns: 34px 46px 25px 25px 20px 27px 23px 27px 27px 66px 46px; font-size: 12px; }
.tray > svg:first-child { margin-left: 1px; }
.temp { font-size: 14.5px; letter-spacing: -.5px; }
.lang { letter-spacing: -.4px; margin-left: -2px; }
.clock { display: flex; flex-direction: column; align-items: center; gap: 2px; line-height: 16px; letter-spacing: -.4px; }
.notif { position: relative; padding-left: 10px; }
.notif b { position: absolute; left: 18px; top: 7px; width: 15px; height: 15px; border: 1px solid #999; border-radius: 50%; background: #303846; font-size: 10px; line-height: 13px; text-align: center; }
.watermark { position: absolute; left: 1073px; top: 650px; color: #b5b5b5; }
.watermark p { white-space: nowrap; font-size: 14px; line-height: 20px; letter-spacing: .17px; }
.watermark p:first-child { font-size: 19px; line-height: 25px; letter-spacing: .05px; }
```
